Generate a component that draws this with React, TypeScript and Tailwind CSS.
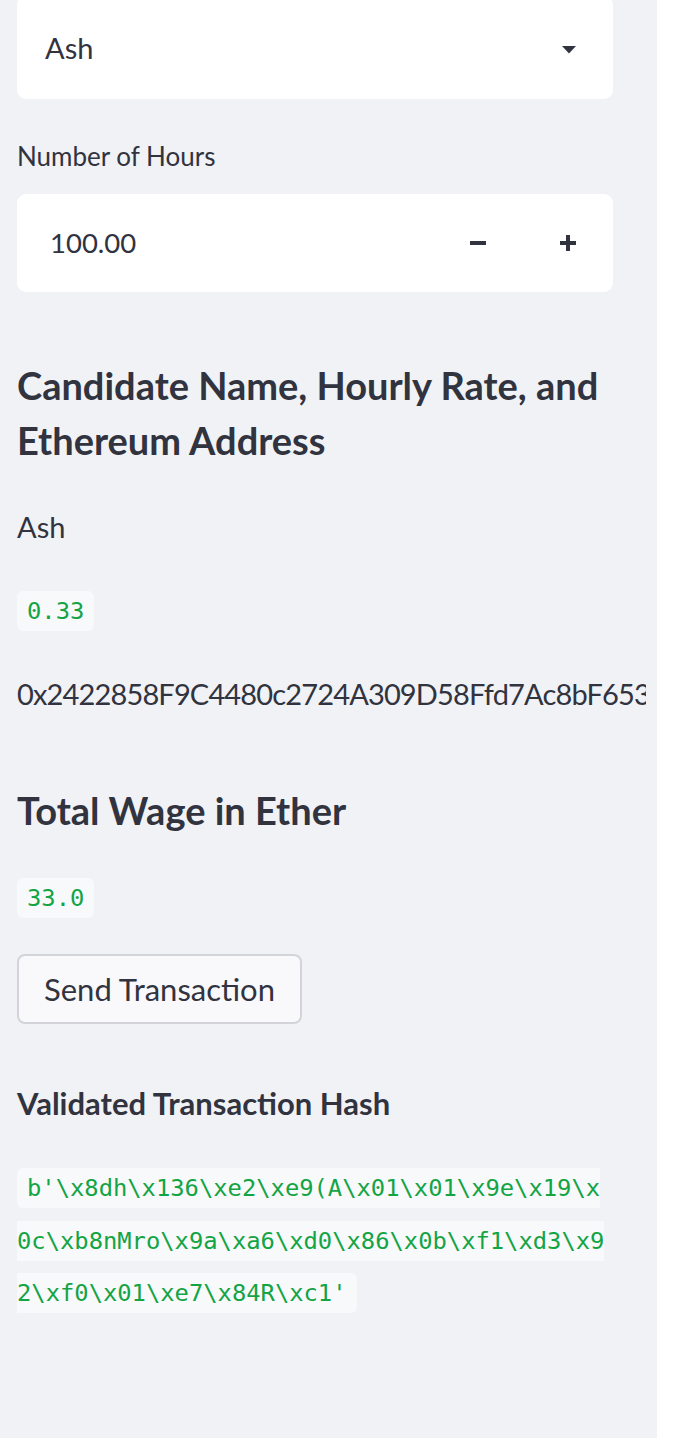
import React from "react";

const txHash =
  "b'\\x8dh\\x136\\xe2\\xe9(A\\x01\\x01\\x9e\\x19\\x0c\\xb8nMro\\x9a\\xa6\\xd0\\x86\\x0b\\xf1\\xd3\\x92\\xf0\\x01\\xe7\\x84R\\xc1'";

function CodeChip({ children }: { children: React.ReactNode }) {
  return (
    <code className="rounded-[6px] bg-[#f8f9fb] px-[10px] py-[6px] font-['DejaVu_Sans_Mono',monospace] text-[23.8px] text-[#13a444]">
      {children}
    </code>
  );
}

export default function App() {
  return (
    <div className="flex min-h-[1438px] w-[676px] overflow-hidden bg-white font-['Lato','Noto_Sans',sans-serif] text-[#31333f]">
      <aside className="flex w-[657px] shrink-0 flex-col bg-[#f0f2f6] pl-[17px] pr-[44px]">
        {/* selectbox */}
        <div className="mt-[-4px] flex h-[103px] items-center justify-between rounded-[9px] bg-white pl-[28px] pr-[37px]">
          <span className="text-[29px]">Ash</span>
          <svg width="14" height="8" viewBox="0 0 14 8" className="mt-[4px]">
            <path d="M0 0h14L7 7.5z" fill="#31333f" />
          </svg>
        </div>

        <label className="mt-[39px] block text-[26px] leading-[36px]">Number of Hours</label>

        {/* number input */}
        <div className="mt-[20px] flex h-[98px] items-center rounded-[9px] bg-white">
          <span className="flex-1 pl-[33px] text-[27.5px]">100.00</span>
          <button className="flex h-full w-[90px] items-center justify-center">
            <svg width="16" height="16" viewBox="0 0 16 16">
              <rect x="0" y="6" width="16" height="4" fill="#31333f" />
            </svg>
          </button>
          <button className="flex h-full w-[90px] items-center justify-center">
            <svg width="16" height="16" viewBox="0 0 16 16">
              <rect x="0" y="6" width="16" height="4" fill="#31333f" />
              <rect x="6" y="0" width="4" height="16" fill="#31333f" />
            </svg>
          </button>
        </div>

        <h3 className="mt-[66px] text-[38px] font-bold leading-[55px]">
          Candidate Name, Hourly Rate, and Ethereum Address
        </h3>

        <p className="mt-[39px] text-[29px] leading-[40px]">Ash</p>

        <p className="mt-[44px] leading-[40px]">
          <CodeChip>0.33</CodeChip>
        </p>

        <div className="mt-[41px] w-[629px] overflow-hidden whitespace-nowrap text-[29px] leading-[40px] tracking-[-0.85px]">
          0x2422858F9C4480c2724A309D58Ffd7Ac8bF6532e
        </div>

        <h3 className="mt-[69px] text-[38px] font-bold leading-[55px]">Total Wage in Ether</h3>

        <p className="mt-[40px] leading-[40px]">
          <CodeChip>33.0</CodeChip>
        </p>

        <div className="mt-[34px]">
          <button className="h-[70px] rounded-[8px] border-2 border-[#d3d4d9] bg-[#f9f9fb] px-[25px] text-[31px]">
            Send Transaction
          </button>
        </div>

        <h4 className="mt-[59px] text-[31px] font-bold leading-[40px]">Validated Transaction Hash</h4>

        <p className="mt-[40px] break-all leading-[51.5px]">
          <CodeChip>{txHash}</CodeChip>
        </p>
      </aside>
    </div>
  );
}
